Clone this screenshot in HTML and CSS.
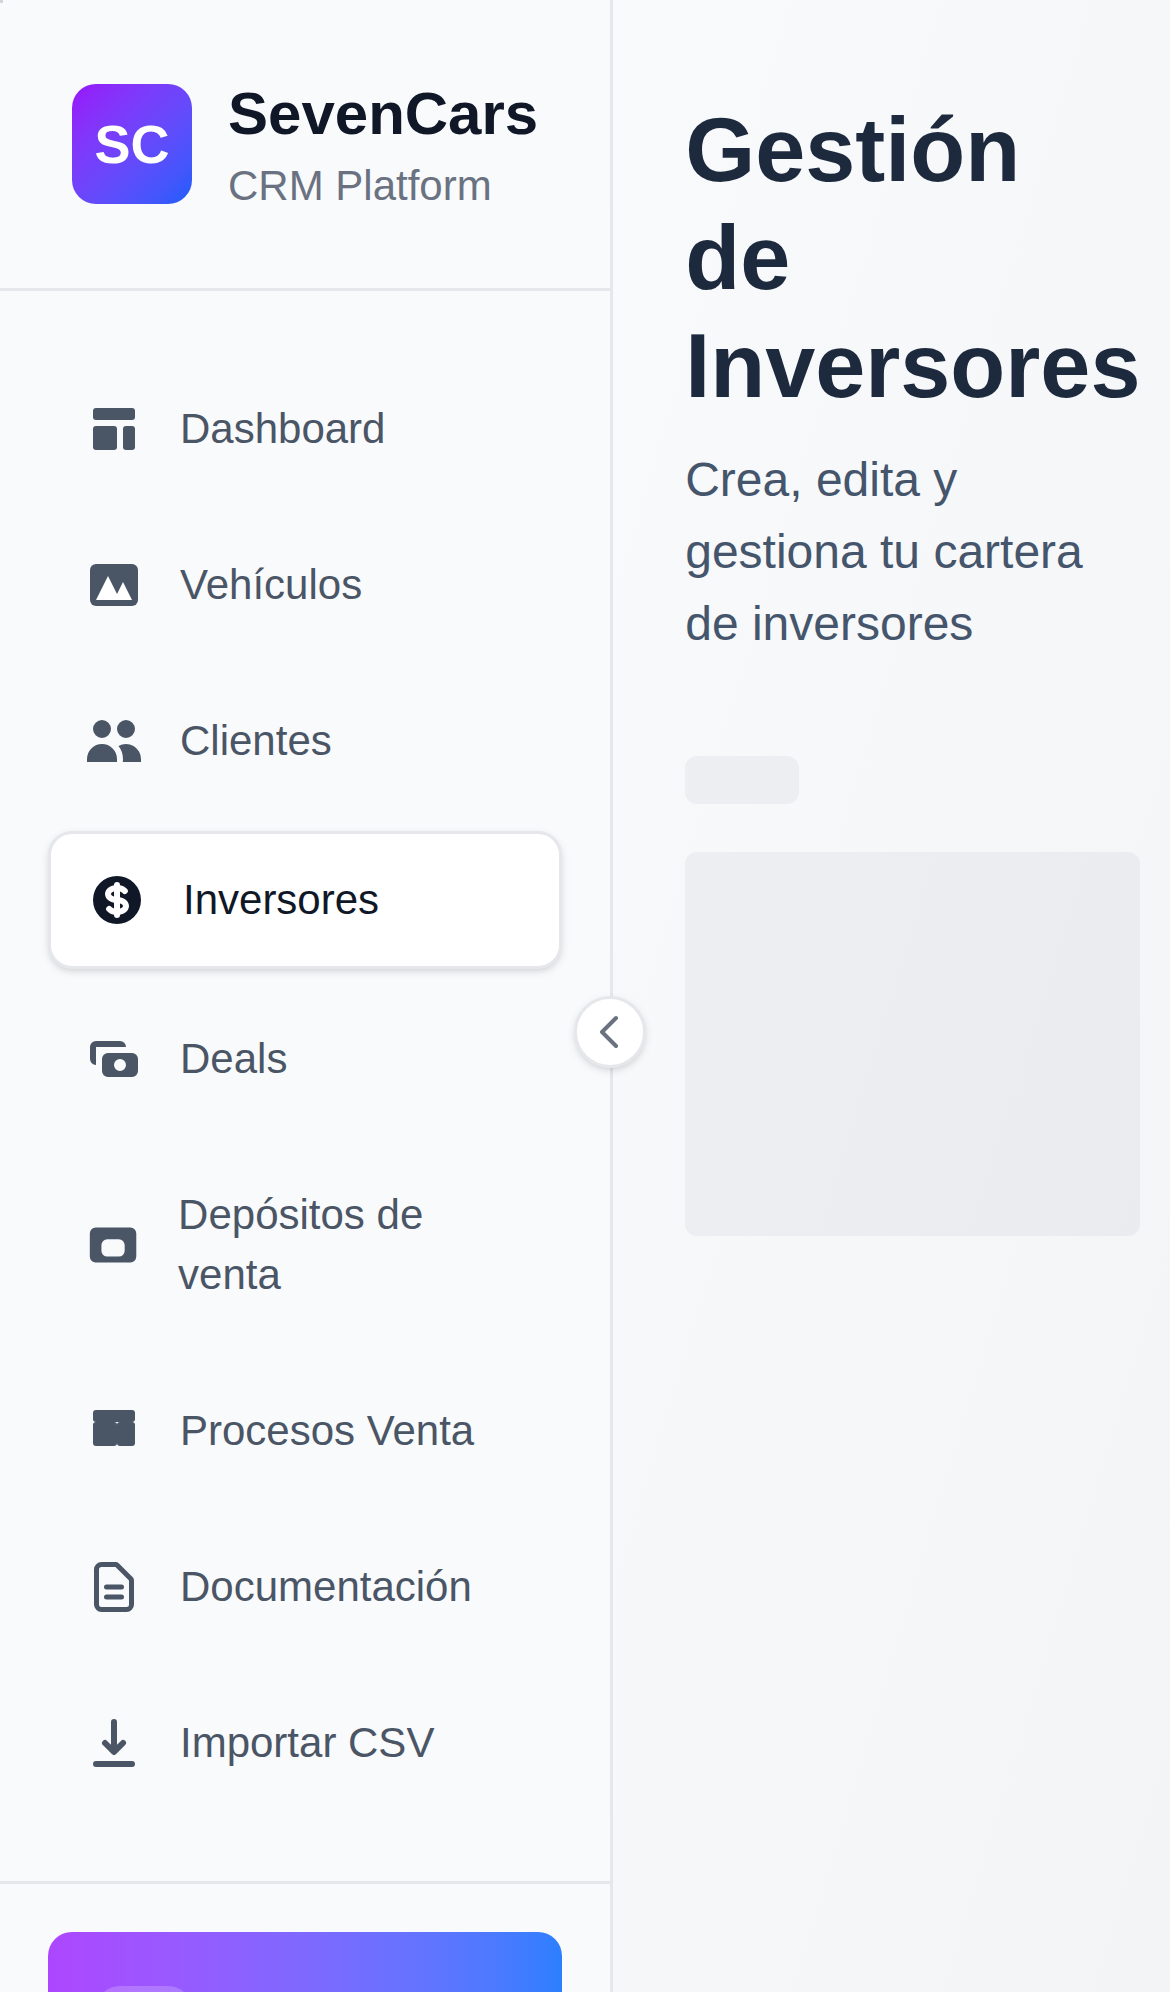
FILE: index.html
```html
<!DOCTYPE html>
<html lang="es">
<head>
<meta charset="utf-8">
<meta name="viewport" content="width=device-width, initial-scale=1">
<title>SevenCars CRM</title>
<link rel="stylesheet" href="styles.css">
</head>
<body>
<div class="app">
  <aside class="sidebar">
    <div class="sidebar-content">
      <header class="brand">
        <div class="brand-logo">SC</div>
        <div class="brand-text">
          <div class="brand-name">SevenCars</div>
          <div class="brand-tagline">CRM Platform</div>
        </div>
      </header>
      <nav class="nav">
        <a class="nav-item" href="#">
          <svg class="icon" viewBox="0 0 20 20" aria-hidden="true"><rect x="3" y="3" width="14" height="4" rx="1"/><rect x="3" y="9" width="8" height="8" rx="1"/><rect x="13" y="9" width="4" height="8" rx="1"/></svg>
          <span>Dashboard</span>
        </a>
        <a class="nav-item" href="#">
          <svg class="icon" viewBox="0 0 20 20" aria-hidden="true"><rect x="2" y="3" width="16" height="14" rx="2"/><path class="icon-cut" d="M4 15 8 7l3 6 2-4 3 6z"/></svg>
          <span>Vehículos</span>
        </a>
        <a class="nav-item" href="#">
          <svg class="icon" viewBox="0 0 20 20" aria-hidden="true"><path d="M9 6a3 3 0 1 1-6 0 3 3 0 0 1 6 0zM17 6a3 3 0 1 1-6 0 3 3 0 0 1 6 0zM12.930 17c.046-.327.070-.660.070-1a6.970 6.970 0 0 0-1.500-4.330A5 5 0 0 1 19 16v1h-6.070zM6 11a5 5 0 0 1 5 5v1H1v-1a5 5 0 0 1 5-5z"/></svg>
          <span>Clientes</span>
        </a>
        <a class="nav-item nav-item-active" href="#" aria-current="page">
          <svg class="icon" viewBox="0 0 20 20" aria-hidden="true"><path d="M8.433 7.418c.155-.103.346-.196.567-.267v1.698a2.305 2.305 0 0 1-.567-.267C8.070 8.340 8 8.114 8 8c0-.114.070-.340.433-.582zM11 12.849v-1.698c.220.071.412.164.567.267.364.243.433.468.433.582 0 .114-.070.340-.433.582a2.305 2.305 0 0 1-.567.267z"/><path fill-rule="evenodd" d="M10 18a8 8 0 1 0 0-16 8 8 0 0 0 0 16zm1-13a1 1 0 1 0-2 0v.092a4.535 4.535 0 0 0-1.676.662C6.602 6.234 6 7.009 6 8c0 .990.602 1.765 1.324 2.246.480.320 1.054.545 1.676.662v1.941c-.391-.127-.680-.317-.843-.504a1 1 0 1 0-1.510 1.310c.562.649 1.413 1.076 2.353 1.253V15a1 1 0 1 0 2 0v-.092a4.535 4.535 0 0 0 1.676-.662C13.398 13.766 14 12.991 14 12c0-.990-.602-1.765-1.324-2.246A4.535 4.535 0 0 0 11 9.092V7.151c.391.127.680.317.843.504a1 1 0 1 0 1.511-1.310c-.563-.649-1.413-1.076-2.354-1.253V5z"/></svg>
          <span>Inversores</span>
        </a>
        <a class="nav-item" href="#">
          <svg class="icon" viewBox="0 0 20 20" aria-hidden="true"><path fill-rule="evenodd" d="M4 4a2 2 0 0 0-2 2v4a2 2 0 0 0 2 2V6h10a2 2 0 0 0-2-2H4zm2 6a2 2 0 0 1 2-2h8a2 2 0 0 1 2 2v4a2 2 0 0 1-2 2H8a2 2 0 0 1-2-2v-4zm6 4a2 2 0 1 0 0-4 2 2 0 0 0 0 4z"/></svg>
          <span>Deals</span>
        </a>
        <a class="nav-item" href="#">
          <svg class="icon" viewBox="0 0 20 20" aria-hidden="true"><path fill-rule="evenodd" d="M4 4a2 2 0 0 0-2 2v8a2 2 0 0 0 2 2h12a2 2 0 0 0 2-2V6a2 2 0 0 0-2-2H4zm4 4a2 2 0 0 0-2 2v2a2 2 0 0 0 2 2h4a2 2 0 0 0 2-2v-2a2 2 0 0 0-2-2H8z"/></svg>
          <span>Depósitos de venta</span>
        </a>
        <a class="nav-item" href="#">
          <svg class="icon" viewBox="0 0 20 20" aria-hidden="true"><rect x="3" y="3" width="14" height="4" rx="1"/><rect x="3" y="7" width="8" height="8" rx="1"/><rect x="11" y="7" width="6" height="8" rx="1"/></svg>
          <span>Procesos Venta</span>
        </a>
        <a class="nav-item" href="#">
          <svg class="icon icon-line" viewBox="0 0 24 24" aria-hidden="true"><path d="M9 12h6m-6 4h6m2 5H7a2 2 0 0 1-2-2V5a2 2 0 0 1 2-2h5.586a1 1 0 0 1 .707.293l5.414 5.414a1 1 0 0 1 .293.707V19a2 2 0 0 1-2 2z"/></svg>
          <span>Documentación</span>
        </a>
        <a class="nav-item" href="#">
          <svg class="icon" viewBox="0 0 20 20" aria-hidden="true"><path fill-rule="evenodd" d="M3 17a1 1 0 0 1 1-1h12a1 1 0 1 1 0 2H4a1 1 0 0 1-1-1zm3.293-7.707a1 1 0 0 1 1.414 0L9 10.586V3a1 1 0 1 1 2 0v7.586l1.293-1.293a1 1 0 1 1 1.414 1.414l-3 3a1 1 0 0 1-1.414 0l-3-3a1 1 0 0 1 0-1.414z"/></svg>
          <span>Importar CSV</span>
        </a>
      </nav>
      <footer class="sidebar-footer">
        <div class="promo">
          <div class="promo-icon"></div>
        </div>
      </footer>
    </div>
    <button class="toggle" type="button" aria-label="Contraer menú">
      <svg class="toggle-icon" viewBox="0 0 24 24" aria-hidden="true"><path d="M15 19l-7-7 7-7"/></svg>
    </button>
  </aside>
  <main class="main">
    <div class="page-header">
      <h1 class="page-title">Gestión de Inversores</h1>
      <p class="page-subtitle">Crea, edita y gestiona tu cartera de inversores</p>
    </div>
    <div class="skeletons">
      <div class="skeleton skeleton-label"></div>
      <div class="skeleton skeleton-panel"></div>
    </div>
  </main>
  <span class="corner-mark"></span>
</div>
</body>
</html>
```
FILE: styles.css
```css
* {
  box-sizing: border-box;
}

body {
  margin: 0;
  font-family: "Liberation Sans", Arial, sans-serif;
  background: #f9fafb;
}

.app {
  position: relative;
  display: flex;
  height: 100vh;
  overflow: hidden;
}

.sidebar {
  position: relative;
  flex: 0 0 613px;
  border-right: 3px solid #e5e7eb;
  background: #f9fafc;
}

.sidebar-content {
  height: 100%;
  overflow: hidden;
}

.brand {
  display: flex;
  align-items: center;
  gap: 36px;
  padding: 72px;
  border-bottom: 3px solid #e5e7eb;
}

.brand-logo {
  display: flex;
  flex: none;
  align-items: center;
  justify-content: center;
  width: 120px;
  height: 120px;
  border-radius: 24px;
  background: linear-gradient(to bottom right in oklab, #9810fa, #155dfc);
  color: #fff;
  font-size: 54px;
  font-weight: 700;
  line-height: 84px;
}

.brand-name {
  color: #101828;
  font-size: 60px;
  font-weight: 700;
  line-height: 84px;
}

.brand-tagline {
  color: #6a7282;
  font-size: 42px;
  line-height: 60px;
}

.nav {
  display: flex;
  flex-direction: column;
  gap: 24px;
  padding: 72px 48px;
}

.nav-item {
  display: flex;
  align-items: center;
  gap: 36px;
  padding: 36px;
  border-radius: 24px;
  color: #4a5565;
  font-size: 42px;
  line-height: 60px;
  text-decoration: none;
}

.nav-item-active {
  border: 3px solid #e5e7eb;
  background: #fff;
  box-shadow: 0 3px 9px rgba(0, 0, 0, 0.1), 0 3px 6px -3px rgba(0, 0, 0, 0.1);
  color: #101828;
}

.icon {
  flex: 0 1 60px;
  width: 60px;
  height: 60px;
  fill: currentColor;
}

.icon-cut {
  fill: #fff;
}

.icon-line {
  fill: none;
  stroke: currentColor;
  stroke-width: 2;
  stroke-linecap: round;
  stroke-linejoin: round;
}

.sidebar-footer {
  padding: 48px;
  border-top: 3px solid #e5e7eb;
}

.promo {
  padding: 54px 48px;
  border-radius: 24px;
  background: linear-gradient(to right in oklab, #ad46ff, #2b7fff);
}

.promo-icon {
  width: 96px;
  height: 96px;
  border-radius: 24px;
  background: rgba(255, 255, 255, 0.2);
}

.toggle {
  position: absolute;
  top: 50%;
  right: -36px;
  display: flex;
  align-items: center;
  justify-content: center;
  width: 72px;
  height: 72px;
  padding: 0;
  border: 3px solid #e5e7eb;
  border-radius: 50%;
  background: #fff;
  box-shadow: 0 3px 9px rgba(0, 0, 0, 0.1), 0 3px 6px -3px rgba(0, 0, 0, 0.1);
  color: #6a7282;
}

.toggle-icon {
  width: 48px;
  height: 48px;
  fill: none;
  stroke: currentColor;
  stroke-width: 2;
  stroke-linecap: round;
  stroke-linejoin: round;
}

.main {
  flex: 1;
  padding: 96px 72px;
  background: linear-gradient(to bottom right in oklab, #f9fafc, #f3f4f6);
}

.page-header {
  margin-bottom: 96px;
}

.page-title {
  margin: 0 0 24px;
  color: #1d293d;
  font-size: 90px;
  font-weight: 700;
  line-height: 108px;
}

.page-subtitle {
  margin: 0;
  color: #45556c;
  font-size: 48px;
  line-height: 72px;
}

.skeletons {
  display: flex;
  flex-direction: column;
  gap: 48px;
}

.skeleton {
  border-radius: 12px;
  background: rgba(3, 2, 40, 0.04);
}

.skeleton-label {
  width: 25%;
  height: 48px;
}

.skeleton-panel {
  height: 384px;
}

.corner-mark {
  position: absolute;
  top: 0;
  left: 0;
  width: 3px;
  height: 3px;
  background: #d1d5dc;
}
```
